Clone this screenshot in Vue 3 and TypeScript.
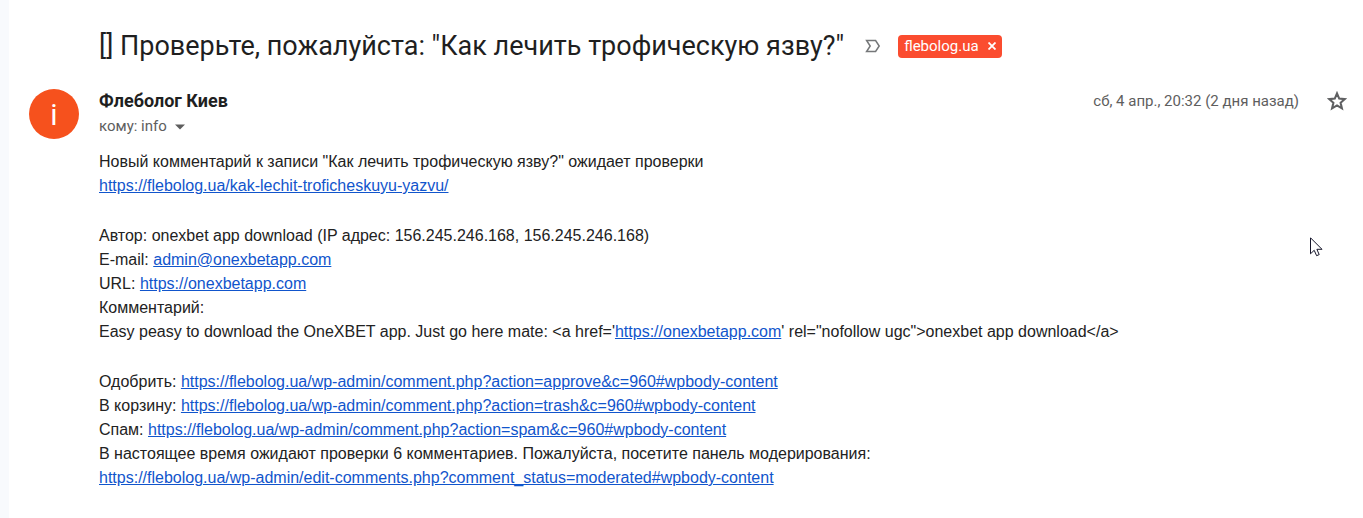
<script setup lang="ts">
interface Part {
  text: string
  href?: string
}

const link = (href: string): Part => ({ text: href, href })

const admin = 'https://flebolog.ua/wp-admin/'

const paragraphs: Part[][][] = [
  [
    [{ text: 'Новый комментарий к записи "Как лечить трофическую язву?" ожидает проверки' }],
    [link('https://flebolog.ua/kak-lechit-troficheskuyu-yazvu/')],
  ],
  [
    [{ text: 'Автор: onexbet app download (IP адрес: 156.245.246.168, 156.245.246.168)' }],
    [{ text: 'E-mail: ' }, { text: 'admin@onexbetapp.com', href: 'mailto:admin@onexbetapp.com' }],
    [{ text: 'URL: ' }, link('https://onexbetapp.com')],
    [{ text: 'Комментарий:' }],
    [
      { text: "Easy peasy to download the OneXBET app. Just go here mate: <a href='" },
      link('https://onexbetapp.com'),
      { text: '\' rel="nofollow ugc">onexbet app download</a>' },
    ],
  ],
  [
    [{ text: 'Одобрить: ' }, link(admin + 'comment.php?action=approve&c=960#wpbody-content')],
    [{ text: 'В корзину: ' }, link(admin + 'comment.php?action=trash&c=960#wpbody-content')],
    [{ text: 'Спам: ' }, link(admin + 'comment.php?action=spam&c=960#wpbody-content')],
    [{ text: 'В настоящее время ожидают проверки 6 комментариев. Пожалуйста, посетите панель модерирования:' }],
    [link(admin + 'edit-comments.php?comment_status=moderated#wpbody-content')],
  ],
]
</script>

<template>
  <main class="page">
    <article class="mail">
      <header class="subject">
        <h1>[] Проверьте, пожалуйста: "Как лечить трофическую язву?"</h1>
        <button class="icon-button importance" type="button" aria-label="Важность">
          <svg width="16" height="14" viewBox="0 0 16 14">
            <path d="M1.6 1.5H10.6L14.2 7L10.6 12.5H1.6L5.2 7Z" fill="none" stroke="#757779" stroke-width="1.5" />
          </svg>
        </button>
        <span class="tag">
          <span>flebolog.ua</span>
          <button class="icon-button" type="button" aria-label="Удалить ярлык">
            <svg width="8" height="8" viewBox="0 0 8 8">
              <path d="M0.5 0.5L7.5 7.5M7.5 0.5L0.5 7.5" stroke="#fff" stroke-width="1.8" />
            </svg>
          </button>
        </span>
      </header>

      <section class="message">
        <div class="avatar" aria-hidden="true">i</div>
        <div class="content">
          <div class="meta">
            <div class="sender">
              <strong>Флеболог Киев</strong>
              <button class="recipient" type="button">
                <span>кому: info</span>
                <svg width="10" height="6" viewBox="0 0 10 6"><path d="M0 0.5H10L5 5.5Z" fill="#5e5e5e" /></svg>
              </button>
            </div>
            <div class="when">
              <time datetime="2020-04-04T20:32">сб, 4 апр., 20:32 (2 дня назад)</time>
              <button class="icon-button" type="button" aria-label="Пометить">
                <svg width="20" height="20" viewBox="0 0 20 20">
                  <path
                    d="M10 2.4L12.2 7.6L17.8 8.1L13.6 11.8L14.9 17.3L10 14.4L5.1 17.3L6.4 11.8L2.2 8.1L7.8 7.6Z"
                    fill="none"
                    stroke="#5f6062"
                    stroke-width="2.1"
                  />
                </svg>
              </button>
            </div>
          </div>

          <div class="body">
            <p v-for="(lines, p) in paragraphs" :key="p">
              <span v-for="(parts, l) in lines" :key="l" class="line">
                <template v-for="(part, i) in parts" :key="i">
                  <a v-if="part.href" :href="part.href">{{ part.text }}</a>
                  <template v-else>{{ part.text }}</template>
                </template>
              </span>
            </p>
          </div>
        </div>
      </section>
    </article>

    <svg class="pointer" width="13" height="20" viewBox="0 0 13 20" aria-hidden="true">
      <path
        d="M0.5 0.8V16.8L4.2 13.3L6.6 18.7L9.2 17.6L6.9 12.3H12Z"
        fill="#fff"
        stroke="#15152a"
        stroke-width="1"
      />
    </svg>
  </main>
</template>

<style>
body {
  margin: 0;
}
</style>

<style scoped>
.page {
  position: relative;
  box-sizing: border-box;
  min-height: 100vh;
  padding-left: 9px;
  background: #f8fafd;
  font-family: Roboto, "Liberation Sans", sans-serif;
  color: #1f1f1f;
}

.mail {
  box-sizing: border-box;
  min-height: 100vh;
  padding: 28px 16px 24px 20px;
  background: #fff;
}

.subject {
  display: flex;
  align-items: center;
  min-height: 36px;
  padding-left: 70px;
}

h1 {
  margin: 0;
  font-size: 27px;
  font-weight: 400;
  line-height: 36px;
}

.icon-button {
  display: flex;
  padding: 0;
  border: 0;
  background: none;
  cursor: pointer;
}

.importance {
  margin: 0 17px 0 21px;
}

.tag {
  display: flex;
  align-items: center;
  gap: 9px;
  height: 23px;
  padding: 0 6px;
  border-radius: 4px;
  background: #fb4c2f;
  color: #fff;
  font-size: 15px;
}

.message {
  display: flex;
  gap: 20px;
  margin-top: 25px;
}

.avatar {
  display: flex;
  flex: none;
  align-items: center;
  justify-content: center;
  width: 50px;
  height: 50px;
  border-radius: 50%;
  background: #f6511d;
  color: #fff;
  font-size: 30px;
}

.content {
  flex: 1;
  min-width: 0;
}

.meta {
  display: flex;
  justify-content: space-between;
}

.sender strong {
  display: block;
  font-size: 18px;
  font-weight: 700;
  line-height: 24px;
}

.recipient {
  display: flex;
  align-items: center;
  gap: 8px;
  padding: 0;
  border: 0;
  background: none;
  color: #5e5e5e;
  font: inherit;
  font-size: 15px;
  line-height: 27px;
  cursor: pointer;
}

.when {
  display: flex;
  align-items: center;
  gap: 28px;
  height: 24px;
  color: #5e5e5e;
  font-size: 15px;
}

.body {
  margin-top: 10px;
  font-family: "Liberation Sans", Arial, sans-serif;
  font-size: 16px;
  line-height: 24px;
  color: #222;
}

.body p {
  margin: 0 0 26px;
}

.line {
  display: block;
  white-space: pre-wrap;
}

.body a {
  color: #1155cc;
}

.pointer {
  position: absolute;
  top: 237px;
  right: 40px;
}
</style>
